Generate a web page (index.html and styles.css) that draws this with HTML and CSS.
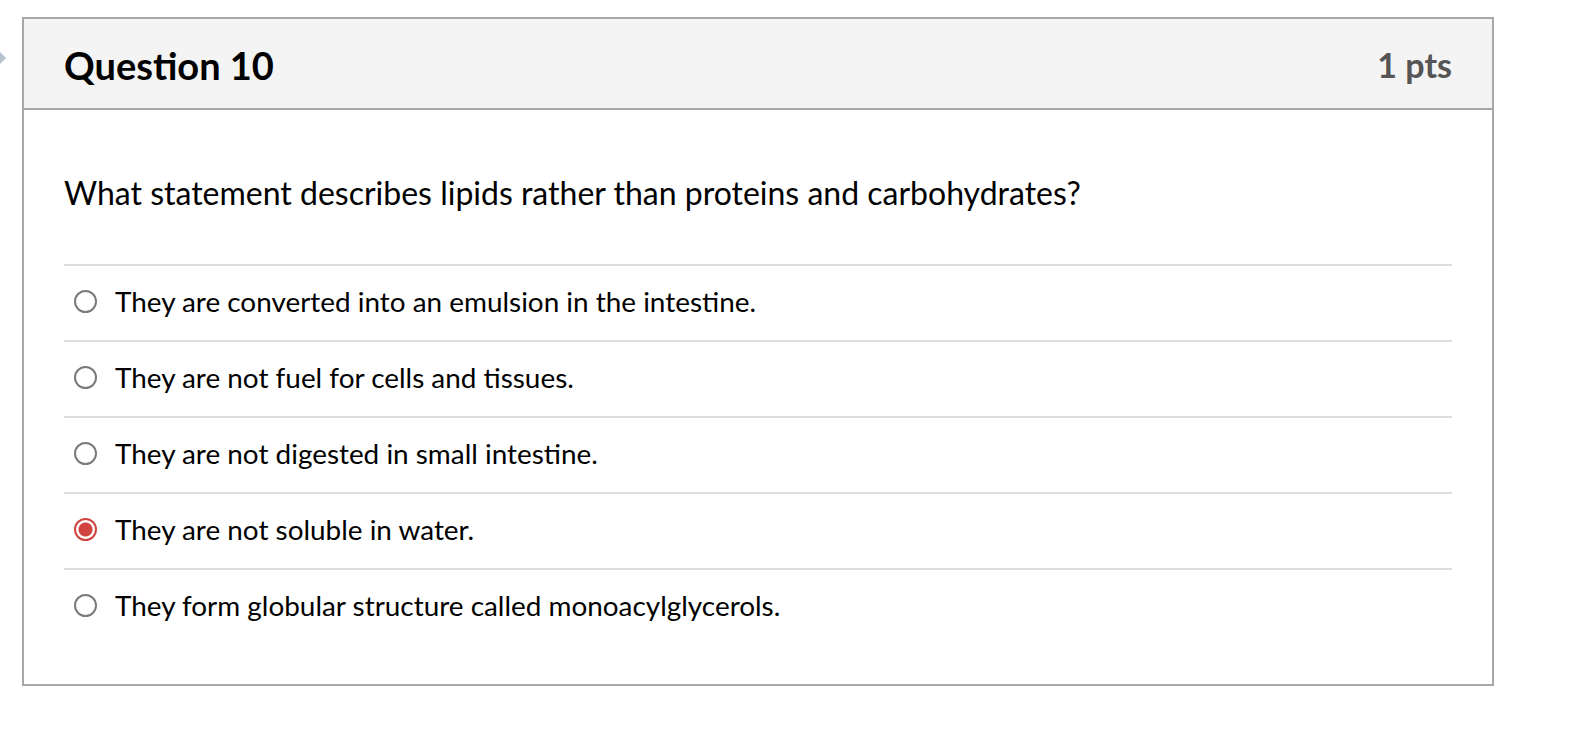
FILE: index.html
```html
<!DOCTYPE html>
<html lang="en">
<head>
<meta charset="utf-8">
<title>Question 10</title>
<link rel="stylesheet" href="styles.css">
</head>
<body>
<div class="edge-mark"></div>
<div class="question">
  <div class="q-header">
    <h2 class="q-title">Question 10</h2>
    <div class="q-points">1 pts</div>
  </div>
  <div class="q-body">
    <p class="q-text">What statement describes lipids rather than proteins and carbohydrates?</p>
    <div class="answers">
      <label class="answer"><span class="radio"></span><span class="answer-text">They are converted into an emulsion in the intestine.</span></label>
      <label class="answer"><span class="radio"></span><span class="answer-text">They are not fuel for cells and tissues.</span></label>
      <label class="answer"><span class="radio"></span><span class="answer-text">They are not digested in small intestine.</span></label>
      <label class="answer"><span class="radio checked"></span><span class="answer-text">They are not soluble in water.</span></label>
      <label class="answer"><span class="radio"></span><span class="answer-text">They form globular structure called monoacylglycerols.</span></label>
    </div>
  </div>
</div>
</body>
</html>
```
FILE: styles.css
```css
* { box-sizing: border-box; }
html, body { margin: 0; padding: 0; background: #fff; }
body {
  font-family: Lato, "Open Sans", sans-serif;
  color: #000;
  padding: 17px 0 0 22px;
  position: relative;
}
.edge-mark {
  position: absolute;
  left: -6px;
  top: 53px;
  width: 10px;
  height: 10px;
  background: #b7c3cf;
  transform: rotate(45deg);
}
.question {
  width: 1472px;
  border: 2px solid #a8a8a8;
  background: #fff;
}
.q-header {
  height: 91px;
  background: #f4f4f4;
  border-bottom: 2px solid #a8a8a8;
  padding: 0 40px;
  display: flex;
  align-items: center;
  justify-content: space-between;
}
.q-title {
  margin: 0;
  font-size: 38px;
  font-weight: 700;
  color: #000;
  position: relative;
  top: 1px;
}
.q-points {
  font-size: 34px;
  font-weight: 700;
  color: #555;
  position: relative;
  top: 1px;
}
.q-body {
  padding: 65px 40px 40px;
}
.q-text {
  margin: 0 0 53px;
  font-size: 32px;
  line-height: 36px;
}
.answer {
  display: flex;
  align-items: center;
  height: 76px;
  border-top: 2px solid #dddddd;
  padding: 0 0 4px 10px;
}
.radio {
  width: 23px;
  height: 23px;
  border: 2px solid #7a7a7a;
  border-radius: 50%;
  flex: none;
  margin-right: 18px;
  background: #fff;
}
.radio.checked {
  border: 2px solid #d0433f;
  background: radial-gradient(circle, #d0433f 0 6.5px, #fff 7.5px);
}
.answer-text {
  font-size: 27.9px;
  line-height: 30px;
}
```
